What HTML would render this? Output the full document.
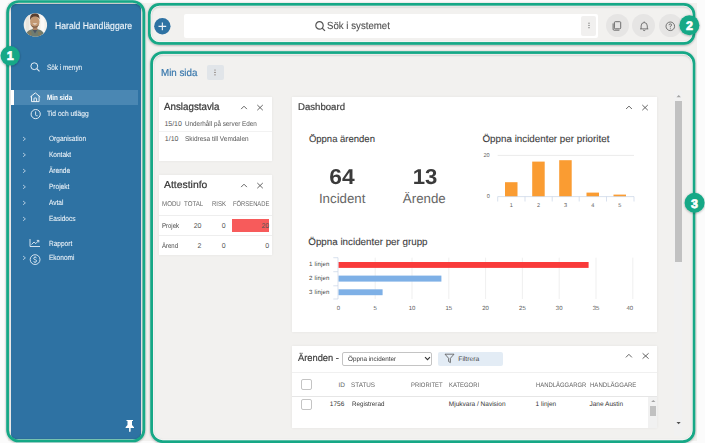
<!DOCTYPE html>
<html><head><meta charset="utf-8">
<style>
*{margin:0;padding:0;box-sizing:border-box}
html,body{width:705px;height:443px;overflow:hidden;background:#fbfbfb;font-family:"Liberation Sans",sans-serif;text-rendering:geometricPrecision}
.a{position:absolute}
.t{position:absolute;white-space:nowrap;line-height:1;transform-origin:0 0}
#app{position:absolute;left:0;top:0;width:697px;height:441px;background:#f2f1ef;overflow:hidden}
#side{position:absolute;left:10.8px;top:3.9px;width:130px;height:434.9px;background:#2e72a3;border-radius:4.5px}
.st{color:#eef4f9;font-size:7.5px;-webkit-text-stroke:0.08px #eef4f9}
.dk{color:#333;-webkit-text-stroke:0.2px #333}
.sm{font-size:7px;color:#555}
.hd{font-size:7px;color:#6a6a6a}
.md{color:#3c3c3c;-webkit-text-stroke:0.1px #3c3c3c}
.th{font-size:6.5px;color:#666}
.tr{font-size:6.5px;color:#333}
.card{position:absolute;background:#fff;box-shadow:0 0 3px rgba(0,0,0,.06)}
.frame{position:absolute;border:2.5px solid #14a886;box-shadow:0 1px 3px rgba(0,0,0,.35), inset 0 0 0 1.5px rgba(255,255,255,.9)}
.badge{position:absolute;width:20px;height:20px;border-radius:50%;background:#14a886;box-shadow:0 0 1.5px rgba(0,0,0,.6);color:#fff;font-weight:bold;font-size:13px;line-height:20px;text-align:center}
</style></head><body>
<div id="app">
  <div class="a" style="left:8.8px;top:2.8px;width:133.9px;height:436.9px;border-radius:9px;background:#efefef"></div>
  <div id="side"></div>
  <!-- avatar -->
  <svg class="a" style="left:23px;top:13px" width="25" height="25" viewBox="0 0 25 25">
    <defs><clipPath id="av"><circle cx="12.4" cy="12.05" r="11.7"/></clipPath></defs>
    <g clip-path="url(#av)">
      <rect width="25" height="25" fill="#f1efe9"/>
      <rect x="17.5" y="0" width="4" height="25" fill="#faf9f6"/>
      <rect x="3" y="0" width="3" height="25" fill="#e9e6de"/>
      <path d="M1.5 25 C2.5 18.5 6.5 16 12 16 C17.5 16 21.5 18.5 22.5 25Z" fill="#6f7c70"/>
      <path d="M5 19 L8 18 L9 22 L6 23Z M15 18.5 L18.5 19.5 L17.5 23 L15 22Z" fill="#8a7a5a" opacity="0.8"/>
      <path d="M9.5 16.5 L12 20.5 L14.5 16.5Z" fill="#4a5566"/>
      <rect x="9.8" y="12.5" width="4.6" height="4.5" fill="#a98062"/>
      <ellipse cx="11.8" cy="8.8" rx="4.7" ry="5.9" fill="#c29873"/>
      <path d="M7.1 7.5 C6.6 2.2 9 0.3 11.8 0.3 C15 0.3 16.8 2.2 16.5 6.5 C15.8 4.2 14 3.5 11.8 3.6 C9.6 3.7 7.9 4.6 7.1 7.5Z" fill="#5b4030"/>
      <path d="M9.6 10.2 Q11.9 12.6 14.2 10.2 Q11.9 10.9 9.6 10.2Z" fill="#fff"/>
      <path d="M7.4 10.5 Q8 14.6 11.8 14.8 Q15.6 14.6 16.2 10.5 Q15.2 13.5 11.8 13.6 Q8.4 13.5 7.4 10.5Z" fill="#7a5a45"/>
    </g>
  </svg>
  <div class="t" style="left:54.6px;top:22.0px;font-size:9.8px;color:#eef4f9;-webkit-text-stroke:0.15px #eef4f9;transform:scaleX(0.88)">Harald Handläggare</div>
  <!-- search menu -->
  <svg class="a" style="left:30.4px;top:62.4px" width="11" height="10" viewBox="0 0 11 10"><circle cx="4.3" cy="4.2" r="3.4" fill="none" stroke="#e3edf6" stroke-width="1"/><path d="M6.8 6.7 L9.5 9.4" stroke="#e3edf6" stroke-width="1.1"/></svg>
  <div class="t st" style="left:46.8px;top:63.8px;font-size:7.8px;transform:scaleX(0.82)">Sök i menyn</div>
  <!-- active -->
  <div class="a" style="left:11px;top:90px;width:127px;height:15.2px;background:#4a87b3"></div>
  <div class="a" style="left:11px;top:90px;width:2.8px;height:15.2px;background:#fff"></div>
  <svg class="a" style="left:28.9px;top:92px" width="13" height="11" viewBox="0 0 13 11"><path d="M1.4 4.9 L6.3 0.9 L11.2 4.9 M2.5 4.1 V9.6 H10.1 V4.1 M5 9.6 V6.7 Q5 6 5.7 6 H6.9 Q7.6 6 7.6 6.7 V9.6" fill="none" stroke="#f2f7fb" stroke-width="0.95" stroke-linejoin="round"/></svg>
  <div class="t st" style="left:46.8px;top:93.5px;font-size:7.6px;font-weight:bold;color:#fff;-webkit-text-stroke:0;transform:scaleX(0.83)">Min sida</div>
  <svg class="a" style="left:29.6px;top:108.5px" width="12" height="11" viewBox="0 0 12 11"><circle cx="5.7" cy="5.1" r="4.6" fill="none" stroke="#e8f0f7" stroke-width="0.95"/><path d="M5.6 2.4 V5.8 Q5.6 6.6 6.4 6.7 L7.7 6.8" fill="none" stroke="#e8f0f7" stroke-width="0.9"/></svg>
  <div class="t st" style="left:46.8px;top:109.5px;font-size:7.6px;transform:scaleX(0.88)">Tid och utlägg</div>
  <!-- expandable -->
  <svg class="a" style="left:22px;top:135.5px" width="5" height="6" viewBox="0 0 5 6"><path d="M1 1 L3.4 2.9 L1 4.8" fill="none" stroke="#c9dbea" stroke-width="0.8"/></svg>
  <div class="t st" style="left:48.8px;top:134.5px;font-size:7.6px;transform:scaleX(0.86)">Organisation</div>
  <svg class="a" style="left:22px;top:151.7px" width="5" height="6" viewBox="0 0 5 6"><path d="M1 1 L3.4 2.9 L1 4.8" fill="none" stroke="#c9dbea" stroke-width="0.8"/></svg>
  <div class="t st" style="left:48.8px;top:150.7px;font-size:7.6px;transform:scaleX(0.86)">Kontakt</div>
  <svg class="a" style="left:22px;top:167.9px" width="5" height="6" viewBox="0 0 5 6"><path d="M1 1 L3.4 2.9 L1 4.8" fill="none" stroke="#c9dbea" stroke-width="0.8"/></svg>
  <div class="t st" style="left:48.8px;top:166.9px;font-size:7.6px;transform:scaleX(0.86)">Ärende</div>
  <svg class="a" style="left:22px;top:184.0px" width="5" height="6" viewBox="0 0 5 6"><path d="M1 1 L3.4 2.9 L1 4.8" fill="none" stroke="#c9dbea" stroke-width="0.8"/></svg>
  <div class="t st" style="left:48.8px;top:183px;font-size:7.6px;transform:scaleX(0.86)">Projekt</div>
  <svg class="a" style="left:22px;top:200.2px" width="5" height="6" viewBox="0 0 5 6"><path d="M1 1 L3.4 2.9 L1 4.8" fill="none" stroke="#c9dbea" stroke-width="0.8"/></svg>
  <div class="t st" style="left:48.8px;top:199.2px;font-size:7.6px;transform:scaleX(0.86)">Avtal</div>
  <svg class="a" style="left:22px;top:216.4px" width="5" height="6" viewBox="0 0 5 6"><path d="M1 1 L3.4 2.9 L1 4.8" fill="none" stroke="#c9dbea" stroke-width="0.8"/></svg>
  <div class="t st" style="left:48.8px;top:215.4px;font-size:7.6px;transform:scaleX(0.86)">Easidocs</div>
  <!-- rapport -->
  <svg class="a" style="left:29px;top:238px" width="12" height="10" viewBox="0 0 12 10"><path d="M1 1 V8.5 H11" fill="none" stroke="#e3edf6" stroke-width="0.9"/><path d="M2.5 6.5 L5 4 L6.8 5.6 L9.6 2.6 M7.8 2.4 H9.8 V4.4" fill="none" stroke="#e3edf6" stroke-width="0.9"/></svg>
  <div class="t st" style="left:48.8px;top:239.6px;font-size:7.6px;transform:scaleX(0.86)">Rapport</div>
  <svg class="a" style="left:22px;top:255.2px" width="5" height="6" viewBox="0 0 5 6"><path d="M1 1 L3.4 2.9 L1 4.8" fill="none" stroke="#c9dbea" stroke-width="0.8"/></svg>
  <svg class="a" style="left:29px;top:253.5px" width="12" height="12" viewBox="0 0 12 12"><circle cx="6.1" cy="5.6" r="4.9" fill="none" stroke="#e3edf6" stroke-width="0.9"/><path d="M7.6 3.9 Q7.2 3.2 6.1 3.2 Q4.7 3.2 4.7 4.4 Q4.7 5.3 6.1 5.6 Q7.6 5.9 7.6 7 Q7.6 8.1 6.1 8.1 Q4.9 8.1 4.5 7.3 M6.1 2.4 V3.2 M6.1 8.1 V8.9" fill="none" stroke="#e3edf6" stroke-width="0.85"/></svg>
  <div class="t st" style="left:48.8px;top:254.4px;font-size:7.6px;transform:scaleX(0.86)">Ekonomi</div>
  <!-- pin -->
  <svg class="a" style="left:124px;top:419px" width="12" height="14" viewBox="0 0 12 14"><path d="M2.5 1 H9 V2 H8 V6 L10 8.3 V9 H6.6 V12.5 L5.8 13 L5.1 12.5 V9 H1.6 V8.3 L3.5 6 V2 H2.5Z" fill="#fff"/></svg>
  <!-- topbar -->
  <svg class="a" style="left:154px;top:17.5px" width="17" height="17" viewBox="0 0 17 17"><circle cx="8.35" cy="8.3" r="8.2" fill="#2e72a3"/><path d="M8.35 4.4 V12.3 M4.5 8.4 H12.2" stroke="#eef4f9" stroke-width="1.1"/></svg>
  <div class="a" style="left:184px;top:14px;width:414px;height:24px;background:#fff;border-radius:2px"></div>
  <div class="a" style="left:581.2px;top:15.8px;width:15.3px;height:19.9px;background:#f1f0ef;border-radius:2px"></div>
  <svg class="a" style="left:587px;top:20px" width="4" height="11" viewBox="0 0 4 11"><circle cx="2" cy="3.2" r="0.6" fill="#666"/><circle cx="2" cy="5.4" r="0.6" fill="#666"/><circle cx="2" cy="7.7" r="0.6" fill="#666"/></svg>
  <svg class="a" style="left:315px;top:20.5px" width="11" height="11" viewBox="0 0 11 11"><circle cx="4.5" cy="4.4" r="3.7" fill="none" stroke="#555" stroke-width="1.2"/><path d="M7.2 7.1 L10 9.9" stroke="#555" stroke-width="1.3"/></svg>
  <div class="t" style="left:327.1px;top:21.9px;font-size:10.3px;color:#505050;-webkit-text-stroke:0.12px #505050;transform:scaleX(0.94)">Sök i systemet</div>
  <div class="a" style="left:605.7px;top:14.4px;width:23px;height:23px;border-radius:50%;background:#e6e5e4"></div>
  <div class="a" style="left:632px;top:14.4px;width:23px;height:23px;border-radius:50%;background:#e6e5e4"></div>
  <div class="a" style="left:658.5px;top:14.4px;width:23px;height:23px;border-radius:50%;background:#e6e5e4"></div>
  <svg class="a" style="left:611px;top:19.5px" width="13" height="13" viewBox="0 0 13 13"><rect x="3.4" y="1.7" width="6.3" height="7.1" rx="0.9" fill="none" stroke="#5a5a5a" stroke-width="0.85"/><path d="M2.1 3.4 V9.2 Q2.1 10.2 3.1 10.2 H8.4" fill="none" stroke="#5a5a5a" stroke-width="0.85"/></svg>
  <svg class="a" style="left:637.5px;top:19.5px" width="13" height="13" viewBox="0 0 13 13"><path d="M2.1 8.9 H10.3 M3.1 8.9 V6 Q3.1 2.7 6.2 2.5 Q9.3 2.7 9.3 6 V8.9" fill="none" stroke="#5a5a5a" stroke-width="0.8" stroke-linejoin="round"/><path d="M6.2 1.5 V2.5" stroke="#5a5a5a" stroke-width="0.8"/><path d="M5.1 10.1 Q6.2 11.2 7.3 10.1" fill="none" stroke="#5a5a5a" stroke-width="0.8"/></svg>
  <svg class="a" style="left:664px;top:19.7px" width="13" height="13" viewBox="0 0 13 13"><circle cx="6.3" cy="6.3" r="4.3" fill="none" stroke="#555" stroke-width="0.8"/><path d="M5 5.2 Q5 3.9 6.3 3.9 Q7.6 3.9 7.6 5 Q7.6 5.8 6.3 6.4 V7.3" fill="none" stroke="#555" stroke-width="0.8"/><circle cx="6.3" cy="8.7" r="0.5" fill="#555"/></svg>
  <!-- main title -->
  <div class="t" style="left:160.9px;top:69.2px;font-size:10.2px;color:#3b79ad;-webkit-text-stroke:0.2px #3b79ad;transform:scaleX(0.96)">Min sida</div>
  <div class="a" style="left:207.4px;top:65px;width:16.6px;height:15px;background:#e1e5e9;border-radius:2px"></div>
  <svg class="a" style="left:212.8px;top:67px" width="4" height="11" viewBox="0 0 4 11"><circle cx="2" cy="3" r="0.6" fill="#6a5a50"/><circle cx="2" cy="5.4" r="0.6" fill="#6a5a50"/><circle cx="2" cy="7.8" r="0.6" fill="#6a5a50"/></svg>
  <!-- Anslagstavla -->
  <div class="card" style="left:158.9px;top:97px;width:113.2px;height:64px"></div>
  <div class="t dk" style="left:164.4px;top:103.2px;font-size:10.3px;transform:scaleX(0.95)">Anslagstavla</div>
  <svg class="a" style="left:240px;top:104px" width="25" height="8" viewBox="0 0 25 8"><path d="M1.1 5.1 L4 2.2 L6.9 5.1" fill="none" stroke="#555" stroke-width="0.9"/><path d="M17.3 1 L22.8 6.2 M22.8 1 L17.3 6.2" stroke="#555" stroke-width="0.9"/></svg>
  <div class="t sm" style="left:164.4px;top:120.5px">15/10</div>
  <div class="t sm" style="left:184.7px;top:120.5px;transform:scaleX(0.905)">Underhåll på server Eden</div>
  <div class="a" style="left:158.9px;top:131.2px;width:113.2px;height:0.6px;background:#f2f2f2"></div>
  <div class="t sm" style="left:164.8px;top:135.7px">1/10</div>
  <div class="t sm" style="left:184.7px;top:135.7px;transform:scaleX(0.923)">Skidresa till Vemdalen</div>
  <!-- Attestinfo -->
  <div class="card" style="left:158.6px;top:174.5px;width:113.7px;height:80.3px"></div>
  <div class="t dk" style="left:164px;top:181.2px;font-size:10.2px;transform:scaleX(1.02)">Attestinfo</div>
  <svg class="a" style="left:240px;top:181.5px" width="25" height="8" viewBox="0 0 25 8"><path d="M1.1 5.1 L4 2.2 L6.9 5.1" fill="none" stroke="#555" stroke-width="0.9"/><path d="M17.3 1 L22.8 6.2 M22.8 1 L17.3 6.2" stroke="#555" stroke-width="0.9"/></svg>
  <div class="t hd" style="left:161.7px;top:201.3px;transform:scaleX(0.88)">MODU</div>
  <div class="t hd" style="left:184.3px;top:201.3px;transform:scaleX(0.877)">TOTAL</div>
  <div class="t hd" style="left:212px;top:201.3px;transform:scaleX(0.86)">RISK</div>
  <div class="t hd" style="left:232.8px;top:201.3px;transform:scaleX(0.835)">FÖRSENADE</div>
  <div class="a" style="left:158.6px;top:214.8px;width:113.7px;height:0.6px;background:#eeeeee"></div>
  <div class="a" style="left:232.4px;top:218.7px;width:36.8px;height:12.9px;background:#f75b5b"></div>
  <div class="t sm" style="left:161.7px;top:222.8px;transform:scaleX(0.86);color:#444">Projek</div>
  <div class="t sm" style="left:181.5px;top:222.8px;width:20px;text-align:right">20</div>
  <div class="t sm" style="left:205.6px;top:222.8px;width:20px;text-align:right">0</div>
  <div class="t sm" style="left:249.2px;top:222.8px;width:20px;text-align:right">20</div>
  <div class="a" style="left:158.6px;top:235.1px;width:113.7px;height:0.6px;background:#eeeeee"></div>
  <div class="t sm" style="left:161.7px;top:242.5px;transform:scaleX(0.86);color:#444">Ärend</div>
  <div class="t sm" style="left:181.5px;top:242.5px;width:20px;text-align:right">2</div>
  <div class="t sm" style="left:205.6px;top:242.5px;width:20px;text-align:right">0</div>
  <div class="t sm" style="left:249.2px;top:242.5px;width:20px;text-align:right">0</div>
  <!-- Dashboard -->
  <div class="card" style="left:291.9px;top:96.9px;width:365.4px;height:235px"></div>
  <div class="t" style="left:297.5px;top:102.6px;font-size:9.8px;color:#3f3f3f;-webkit-text-stroke:0.2px #3f3f3f;transform:scaleX(0.98)">Dashboard</div>
  <svg class="a" style="left:625px;top:104px" width="25" height="8" viewBox="0 0 25 8"><path d="M1.1 5 L4 2.1 L6.9 5" fill="none" stroke="#555" stroke-width="0.9"/><path d="M17.3 1 L22.8 6.2 M22.8 1 L17.3 6.2" stroke="#555" stroke-width="0.9"/></svg>
  <div class="t md" style="left:308.9px;top:134.9px;font-size:9.5px">Öppna ärenden</div>
  <div class="t" style="left:302.2px;top:166.9px;width:80px;text-align:center;font-size:21.5px;font-weight:bold;color:#3b3b3b;transform:scaleX(1.06);transform-origin:50% 0">64</div>
  <div class="t" style="left:385px;top:166.9px;width:80px;text-align:center;font-size:21.5px;font-weight:bold;color:#3b3b3b;transform:scaleX(1.03);transform-origin:50% 0">13</div>
  <div class="t" style="left:302.2px;top:191.85px;width:80px;text-align:center;font-size:13.3px;color:#666">Incident</div>
  <div class="t" style="left:384.3px;top:191.85px;width:80px;text-align:center;font-size:13.3px;color:#666">Ärende</div>
  <div class="t md" style="left:482.5px;top:135.1px;font-size:9.8px">Öppna incidenter per prioritet</div>
  <svg class="a" style="left:480px;top:150px" width="160" height="60" viewBox="480 150 160 60">
    <line x1="497.7" y1="155.4" x2="634" y2="155.4" stroke="#e2e2e2" stroke-width="0.7"/>
    <g fill="#fa9c32">
      <rect x="505" y="182.2" width="12.5" height="14.4"/>
      <rect x="532.2" y="161.6" width="12.5" height="35"/>
      <rect x="559.2" y="160.2" width="12.5" height="36.4"/>
      <rect x="586.5" y="192.6" width="12.5" height="4"/>
      <rect x="613.5" y="194.6" width="12.5" height="2"/>
    </g>
    <path d="M497.7 196.6 H634 M497.7 196.6 V201.5 M525 196.6 V201.5 M552.2 196.6 V201.5 M579.2 196.6 V201.5 M606.5 196.6 V201.5 M634 196.6 V201.5" fill="none" stroke="#c8d4e6" stroke-width="0.7"/>
    <g font-family="Liberation Sans" font-size="5.6" fill="#5f5f5f" text-anchor="middle">
      <text x="486.6" y="157.2">20</text>
      <text x="488.2" y="198.2">0</text>
      <text x="511.3" y="206.6">1</text>
      <text x="538.5" y="206.6">2</text>
      <text x="565.6" y="206.6">3</text>
      <text x="592.8" y="206.6">4</text>
      <text x="619.8" y="206.6">5</text>
    </g>
  </svg>
  <div class="t md" style="left:308.3px;top:238.1px;font-size:9.8px">Öppna incidenter per grupp</div>
  <svg class="a" style="left:300px;top:250px" width="345" height="65" viewBox="300 250 345 65">
    <g stroke="#e4e4e4" stroke-width="0.6">
      <line x1="375.2" y1="257.7" x2="375.2" y2="299"/>
      <line x1="412.0" y1="257.7" x2="412.0" y2="299"/>
      <line x1="448.8" y1="257.7" x2="448.8" y2="299"/>
      <line x1="485.6" y1="257.7" x2="485.6" y2="299"/>
      <line x1="522.4" y1="257.7" x2="522.4" y2="299"/>
      <line x1="559.2" y1="257.7" x2="559.2" y2="299"/>
      <line x1="596.0" y1="257.7" x2="596.0" y2="299"/>
      <line x1="632.8" y1="257.7" x2="632.8" y2="299"/>
    </g>
    <rect x="338.4" y="262" width="250.2" height="5.9" fill="#f93a3a"/>
    <rect x="338.4" y="275.6" width="103" height="6" fill="#7eb0e6"/>
    <rect x="338.4" y="289.3" width="44.2" height="5.9" fill="#7eb0e6"/>
    <path d="M338 257.7 V299 M333.3 257.7 H338 M333.3 271.7 H338 M333.3 285.8 H338 M333.3 299 H338" fill="none" stroke="#c8d4e6" stroke-width="0.7"/>
    <g font-family="Liberation Sans" font-size="6.1" fill="#474747" letter-spacing="0.15">
      <text x="309" y="266.3">1 linjen</text>
      <text x="309" y="279.8">2 linjen</text>
      <text x="309" y="293.6">3 linjen</text>
    </g>
    <g font-family="Liberation Sans" font-size="6" fill="#606060" text-anchor="middle">
      <text x="338.4" y="309.6">0</text>
      <text x="375.2" y="309.6">5</text>
      <text x="412.0" y="309.6">10</text>
      <text x="448.8" y="309.6">15</text>
      <text x="485.6" y="309.6">20</text>
      <text x="522.4" y="309.6">25</text>
      <text x="559.2" y="309.6">30</text>
      <text x="596.0" y="309.6">35</text>
      <text x="629.8" y="309.6">40</text>
    </g>
  </svg>
  <!-- Arenden -->
  <div class="card" style="left:291.9px;top:345.5px;width:365.4px;height:82px"></div>
  <div class="t" style="left:297.5px;top:354.4px;font-size:9.6px;color:#3f3f3f;-webkit-text-stroke:0.2px #3f3f3f;transform:scaleX(0.97)">Ärenden -</div>
  <div class="a" style="left:342.1px;top:351.5px;width:89.6px;height:14.1px;border:0.8px solid #c4c4c4;border-radius:2px;background:#fff"></div>
  <div class="t" style="left:348.2px;top:357.0px;font-size:6.5px;color:#333;transform:scaleX(0.97)">Öppna incidenter</div>
  <svg class="a" style="left:424px;top:356px" width="7" height="5" viewBox="0 0 7 5"><path d="M1 1.2 L3.5 3.7 L6 1.2" fill="none" stroke="#333" stroke-width="1.1"/></svg>
  <div class="a" style="left:437.6px;top:351.5px;width:65px;height:14.1px;background:#e3ecf5;border-radius:2px"></div>
  <svg class="a" style="left:443.8px;top:353.3px" width="11" height="11" viewBox="0 0 11 11"><path d="M1 1.2 H10 L6.4 5.3 V9.6 L4.6 8.5 V5.3 Z" fill="none" stroke="#555" stroke-width="0.8" stroke-linejoin="round"/></svg>
  <div class="t" style="left:458.3px;top:357.0px;font-size:6.7px;color:#444">Filtrera</div>
  <svg class="a" style="left:624.5px;top:352px" width="25" height="8" viewBox="0 0 25 8"><path d="M0.9 5.4 L3.9 2.3 L6.9 5.4" fill="none" stroke="#555" stroke-width="0.9"/><path d="M17.6 1.3 L23.6 6.6 M23.6 1.3 L17.6 6.6" stroke="#555" stroke-width="0.9"/></svg>
  <div class="a" style="left:291.9px;top:371.6px;width:365.4px;height:0.5px;background:#f0f0f0"></div>
  <div class="a" style="left:301.2px;top:379px;width:11.3px;height:11px;border:0.8px solid #c4c4c4;border-radius:2px"></div>
  <div class="t th" style="left:324.9px;top:382.9px;width:20px;text-align:right">ID</div>
  <div class="t th" style="left:351.2px;top:382.9px;transform:scaleX(0.975)">STATUS</div>
  <div class="t th" style="left:410.8px;top:382.9px;transform:scaleX(0.91)">PRIORITET</div>
  <div class="t th" style="left:448.8px;top:382.9px;transform:scaleX(0.91)">KATEGORI</div>
  <div class="t th" style="left:535.6px;top:382.9px;transform:scaleX(0.91)">HANDLÄGGARGR</div>
  <div class="t th" style="left:589.5px;top:382.9px;transform:scaleX(0.93)">HANDLÄGGARE</div>
  <div class="a" style="left:291.9px;top:395.9px;width:365.4px;height:0.6px;background:#e6e6e6"></div>
  <div class="a" style="left:301.2px;top:399.3px;width:11.3px;height:11px;border:0.8px solid #c4c4c4;border-radius:2px"></div>
  <div class="t tr" style="left:324.3px;top:401.5px;width:20px;text-align:right">1756</div>
  <div class="t tr" style="left:351.5px;top:401.5px;transform:scaleX(0.965)">Registrerad</div>
  <div class="t tr" style="left:448.8px;top:401.5px">Mjukvara / Navision</div>
  <div class="t tr" style="left:535.6px;top:401.5px">1 linjen</div>
  <div class="t tr" style="left:589.5px;top:401.5px">Jane Austin</div>
  <div class="a" style="left:648px;top:396.5px;width:9.3px;height:31px;background:#f1f1f1"></div>
  <svg class="a" style="left:650px;top:399px" width="7" height="4" viewBox="0 0 7 4"><path d="M1.2 3 L3.3 1 L5.4 3Z" fill="#a3a3a3"/></svg>
  <div class="a" style="left:650.3px;top:405.5px;width:5.8px;height:10px;background:#c1c1c1"></div>
  <!-- main scrollbar -->
  <div class="a" style="left:674px;top:91px;width:8.1px;height:345px;background:#f1f1f1"></div>
  <svg class="a" style="left:675px;top:94px" width="8" height="4" viewBox="0 0 8 4"><path d="M1.5 3.2 L3.7 1 L5.9 3.2Z" fill="#a3a3a3"/></svg>
  <div class="a" style="left:675.2px;top:100.6px;width:6.7px;height:161px;background:#c1c1c1"></div>
  <svg class="a" style="left:675px;top:421px" width="8" height="4" viewBox="0 0 8 4"><path d="M1.5 1 L3.6 3.2 L5.7 1Z" fill="#505050"/></svg>
</div>

<div class="a" style="left:0;top:0;width:7.5px;height:443px;background:#fbfbfb"></div>
<div class="a" style="left:0;top:0;width:705px;height:2.6px;background:#fbfbfb"></div>
<!-- frames -->
<svg class="a" style="left:0;top:0" width="705" height="443" viewBox="0 0 705 443">
<defs><filter id="sh" x="-5%" y="-5%" width="110%" height="110%"><feDropShadow dx="0" dy="0.6" stdDeviation="0.9" flood-color="#000" flood-opacity="0.35"/></filter></defs>
<g fill="none" filter="url(#sh)">
<rect x="7.6" y="1.5" width="136.25" height="439.4" rx="11" stroke="#14a886" stroke-width="2.7"/>
<rect x="149.35" y="4.4" width="544.6" height="39.05" rx="10" stroke="#14a886" stroke-width="2.7"/>
<rect x="151.65" y="52.55" width="542.3" height="389.0" rx="11" stroke="#14a886" stroke-width="2.7"/>
</g>
<g fill="none" stroke="#fff" stroke-width="1" opacity="0.7">
<rect x="151.2" y="6.25" width="540.9" height="35.35" rx="8.2"/>
<rect x="153.5" y="54.4" width="538.6" height="385.3" rx="9.2"/>
</g>
<g fill="#14a886" filter="url(#sh)">
<circle cx="10.2" cy="55.8" r="9.7"/>
<circle cx="689.4" cy="25.3" r="10"/>
<circle cx="694.6" cy="202.8" r="10"/>
</g>
<g fill="#fff" stroke="#fff" stroke-width="0.7" font-family="Liberation Sans" font-weight="bold" font-size="12.5" text-anchor="middle">
<text x="10.2" y="59.7">1</text>
<text x="689.4" y="30">2</text>
<text x="694.6" y="207.5">3</text>
</g>
</svg>
</body></html>
